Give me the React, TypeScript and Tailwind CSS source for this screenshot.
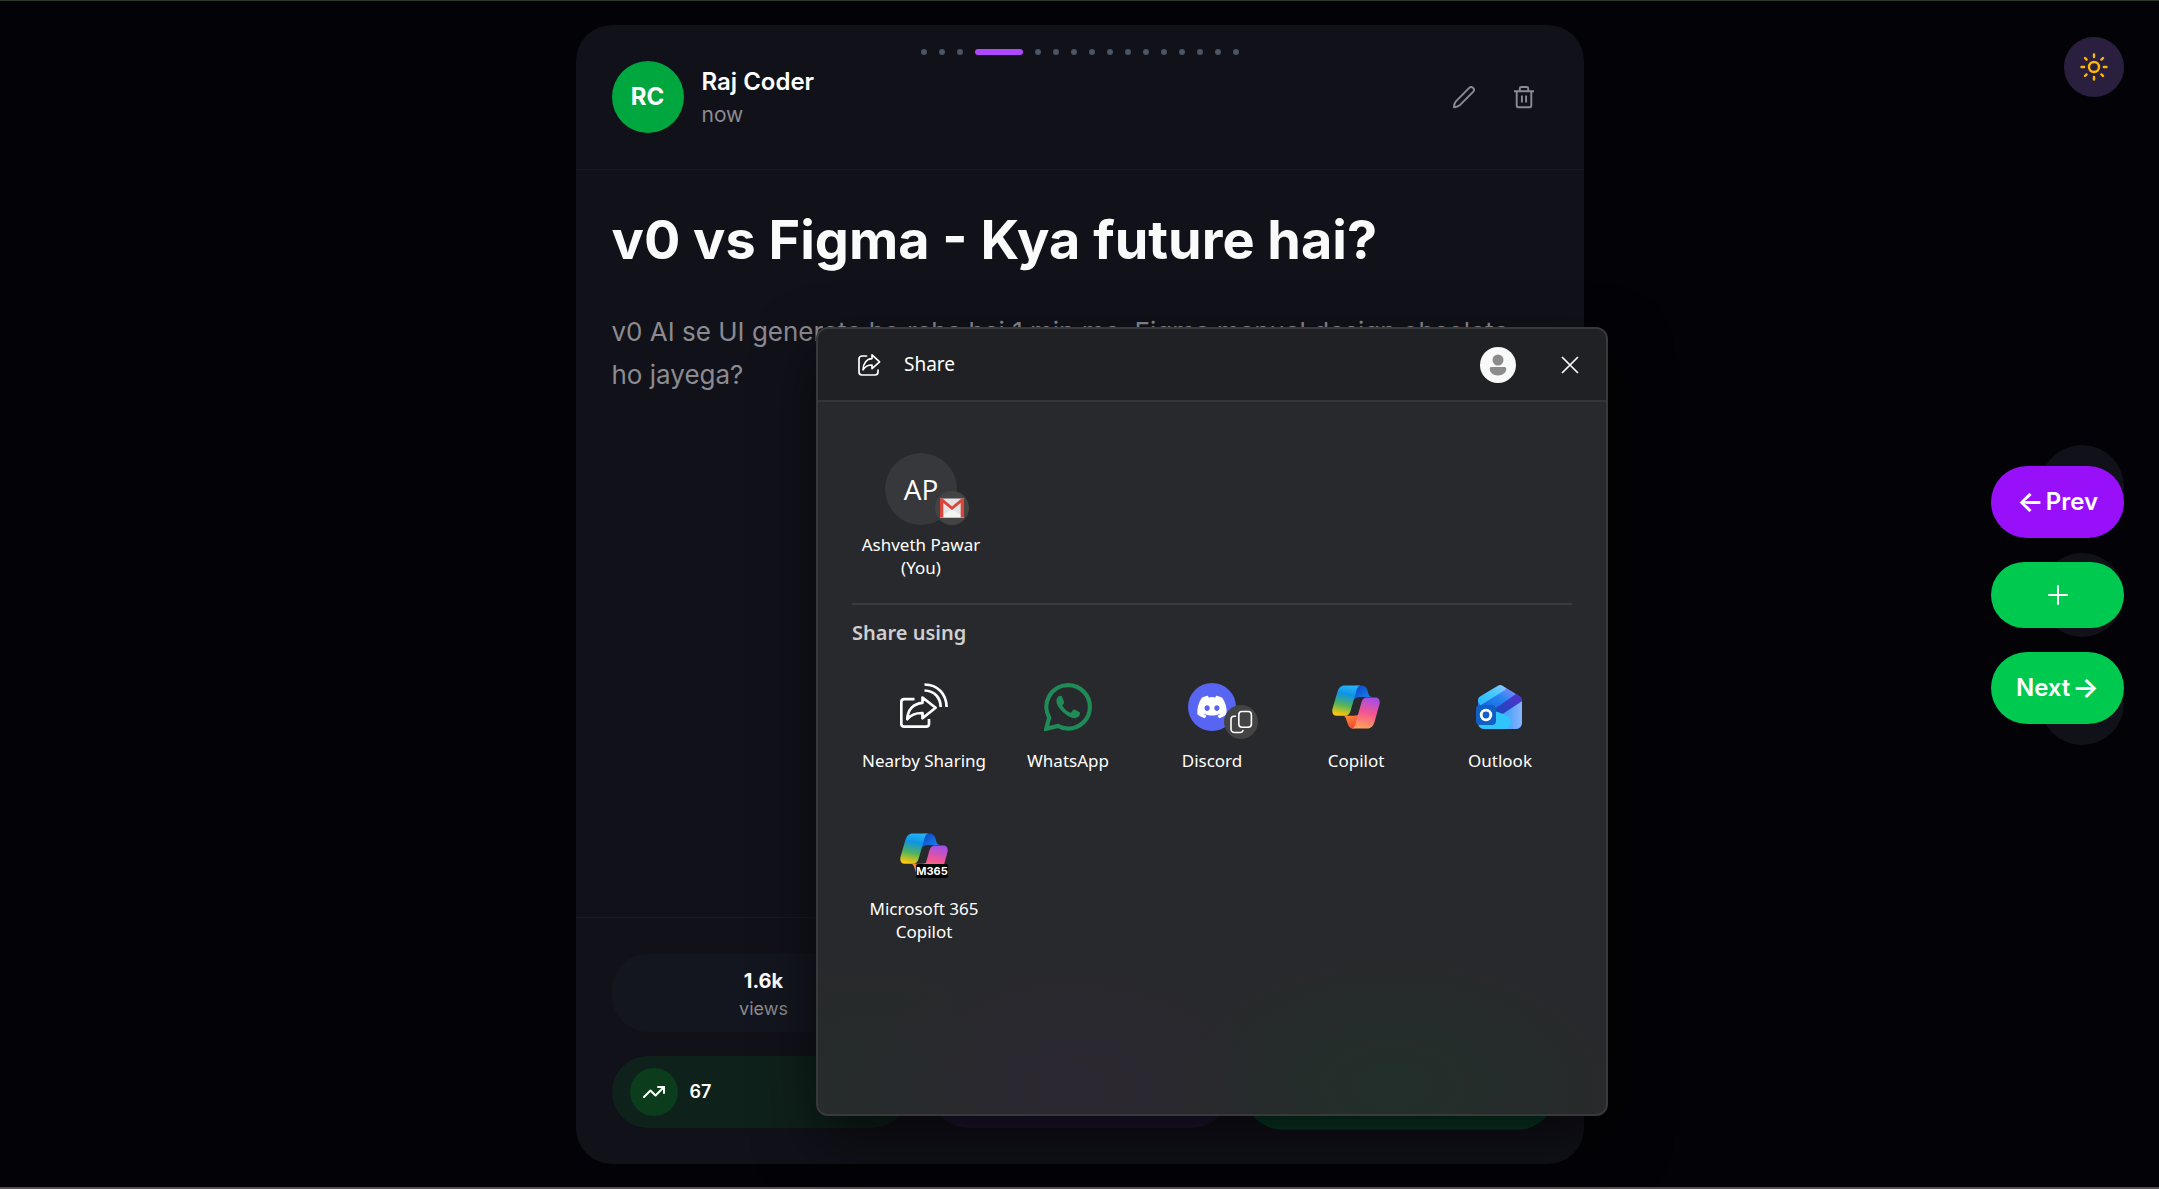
import React from "react";
import clsx from "clsx";
import { FaDiscord } from "react-icons/fa";

const dots = Array.from({ length: 16 }, (_, i) => i);

const PencilIcon = () => (
  <svg viewBox="0 0 24 24" className="size-6" fill="none" stroke="currentColor" strokeWidth="1.9" strokeLinejoin="round" aria-hidden="true">
    <path d="M17.200 2.900a2.750 2.750 0 0 1 3.900 3.900L7.600 20.300c-1.500 1.300-3.500 2-5.600 1.900c0-2.200.500-4.300 1.900-5.900z" />
  </svg>
);

const TrashIcon = () => (
  <svg viewBox="0 0 24 24" className="size-6" fill="none" stroke="currentColor" strokeWidth="1.9" aria-hidden="true">
    <path d="M2 6.200h20M7.800 6.200V3.500A1.500 1.500 0 0 1 9.300 2h5.400a1.500 1.500 0 0 1 1.500 1.500v2.700M4.700 6.200v14.300A1.700 1.700 0 0 0 6.400 22.200h11.200a1.700 1.700 0 0 0 1.700-1.700V6.200M9.900 10.500v7M14.100 10.500v7" />
  </svg>
);

const SunIcon = () => (
  <svg viewBox="0 0 28 28" className="size-7" fill="none" stroke="currentColor" strokeWidth="2.400" strokeLinecap="round" aria-hidden="true">
    <circle cx="14" cy="14" r="5" />
    <path d="M14 1.500v2.600M14 23.900v2.600M1.500 14h2.600M23.900 14h2.600M5 5l1.600 1.600M21.400 21.400l1.600 1.600M5 23l1.600-1.600M21.400 6.600l1.600-1.600" />
  </svg>
);

const ShareIcon = () => (
  <svg viewBox="0 0 24 24" className="size-6" fill="none" stroke="currentColor" strokeWidth="1.700" strokeLinejoin="round" strokeLinecap="round" aria-hidden="true">
    <path d="M9.500 3H5a3 3 0 0 0-3 3v13a3 3 0 0 0 3 3h13a3 3 0 0 0 3-3v-2" />
    <path d="M15 1.800L22.600 8.800L15 15.600V12C10.500 12 8 13.500 6 16.800C6.200 10.500 9.500 6 15 5.600z" />
  </svg>
);

const NearbyIcon = () => (
  <svg viewBox="0 0 48 48" className="size-12" fill="none" stroke="#fff" strokeWidth="2.700" strokeLinejoin="round" aria-hidden="true">
    <path d="M14.500 16.200H4a2.900 2.900 0 0 0-2.700 2.900V41A2.900 2.900 0 0 0 4 43.700h22.200A2.900 2.900 0 0 0 29 41v-5" />
    <path d="M22.500 14.500L35.600 24.800L22.500 35.200V30C15 29.800 11 31.500 7.300 36.200C7.500 27 13 20.500 22.500 19.800z" />
    <path d="M24.500 1.500C38 1.800 46.300 11 46.600 24M24.500 7.500C34.500 7.800 40.400 14.500 40.700 24" />
  </svg>
);

const WhatsAppIcon = () => (
  <svg viewBox="0 0 48 48" className="size-12" aria-hidden="true">
    <path d="M24.200 2.200a21.600 21.600 0 0 1 0 43.400c-3.800 0-7.300-1-10.400-2.700L2.200 45.800l3-11.200A21.700 21.700 0 0 1 24.200 2.200z" fill="none" stroke="#1f8b56" strokeWidth="4.200" />
    <path d="M16.400 12.800c-2.400.3-4 2.600-4 5.200c0 3.400 2.600 7.600 6.400 11c4 3.800 8.600 6.200 11.800 6.200c3 0 5.400-2.200 5.400-5.200c0-.6-.2-.9-.7-1.100l-4.800-2.300c-.6-.3-1-.2-1.400.3l-1.800 2.300c-.4.5-.9.6-1.500.3c-3.200-1.400-5.600-3.700-7.200-6.500c-.3-.5-.2-.9.100-1.300l1.200-1.500c.3-.4.4-.8.2-1.300l-2-5c-.3-.8-.8-1.200-1.700-1.100z" fill="#1f8b56" />
  </svg>
);

const DiscordIcon = () => (
  <span className="flex size-12 items-center justify-center rounded-full bg-[#5865f2] text-white">
    <FaDiscord className="size-8" aria-hidden="true" />
  </span>
);

const CopilotIcon = ({ id, m365 }: { id: string; m365?: boolean }) => (
  <svg viewBox="0 0 48 48" className="size-12" aria-hidden="true">
    <defs>
      <linearGradient id={`${id}-left`} x1=".6" y1="0" x2=".4" y2="1">
        <stop offset="0" stopColor="#23b4f5" />
        <stop offset=".3" stopColor="#0f93e4" />
        <stop offset=".65" stopColor="#4fb35d" />
        <stop offset="1" stopColor="#fdc70c" />
      </linearGradient>
      <linearGradient id={`${id}-right`} x1=".6" y1="0" x2=".4" y2="1">
        <stop offset="0" stopColor="#a44ee8" />
        <stop offset=".5" stopColor="#f5578f" />
        <stop offset="1" stopColor="#ffa25c" />
      </linearGradient>
      <linearGradient id={`${id}-top`} x1="0" y1="0" x2="1" y2="1">
        <stop offset="0" stopColor="#0b40c4" />
        <stop offset="1" stopColor="#1a8cf0" />
      </linearGradient>
      <linearGradient id={`${id}-bottom`} x1="0" y1="0" x2=".6" y2="1">
        <stop offset="0" stopColor="#ffa03c" />
        <stop offset="1" stopColor="#f2452f" />
      </linearGradient>
    </defs>
    <path d="M22 2.500h7.400c3 0 5 1.600 5.900 4.600l1.200 4c.6 2 1.700 3 3.700 3H28c-3 0-5 1-6.500 3z" fill={`url(#${id}-top)`} />
    <path d="M10 32.700c2.200 0 3.200.9 3.700 2.300l2 5.800c1 3 2.400 4.700 5 4.700c3 0 3.600-1.700 4.500-5l2.600-10c-1.500 1.500-3.500 2.200-6 2.200z" fill={`url(#${id}-bottom)`} />
    <path d="M12.600 2.500H29c-2.700 0-3.800 2.300-4.600 5l-5.500 19.200c-1 3.600-2.400 6.100-6 6.100H4.600C1 32.800-.4 29.600.6 25.600L5.400 9c1.300-4.300 3.500-6.500 7.200-6.500z" fill={`url(#${id}-left)`} />
    <path d="M35.300 45.500H19c2.700 0 3.800-2.300 4.600-5l5.500-20c1-3.600 2.400-6.100 6-6.100h8.300c3.600 0 5 3.200 4 7.200L42.500 39c-1.300 4.300-3.500 6.500-7.200 6.500z" fill={`url(#${id}-right)`} />
    {m365 && (
      <g>
        <rect x="16" y="33" width="32" height="14" rx="2" fill="#000" />
        <text x="32" y="44" textAnchor="middle" fontSize="11" fontWeight="700" fill="#fff" fontFamily="Inter, sans-serif">M365</text>
      </g>
    )}
  </svg>
);

const OutlookIcon = () => (
  <svg viewBox="0 0 48 48" className="size-12" aria-hidden="true">
    <defs>
      <linearGradient id="ol-a" x1="0" y1="1" x2="1" y2="0">
        <stop offset="0" stopColor="#22b5fb" />
        <stop offset=".6" stopColor="#4cc9ff" />
        <stop offset="1" stopColor="#9fc4ff" />
      </linearGradient>
      <linearGradient id="ol-b" x1="0" y1="1" x2="1" y2="0">
        <stop offset="0" stopColor="#0f5fd8" />
        <stop offset=".6" stopColor="#2a86f2" />
        <stop offset="1" stopColor="#9a8cff" />
      </linearGradient>
      <linearGradient id="ol-c" x1="0" y1="1" x2="1" y2="0">
        <stop offset="0" stopColor="#0c4fb8" />
        <stop offset="1" stopColor="#5b2fd0" />
      </linearGradient>
      <linearGradient id="ol-d" x1="0" y1="0" x2="1" y2="0">
        <stop offset="0" stopColor="#1c8cf5" />
        <stop offset="1" stopColor="#8fb8ff" />
      </linearGradient>
      <clipPath id="ol-clip">
        <path d="M22 2.700a4 4 0 0 1 4.300 0L44 13.500a4 4 0 0 1 2 3.400V40a6 6 0 0 1-6 6H8a6 6 0 0 1-6-6V16.900a4 4 0 0 1 2-3.400z" />
      </clipPath>
    </defs>
    <g clipPath="url(#ol-clip)">
      <path d="M0 0h48v48H0z" fill="#1d6fe8" />
      <path d="M0 16L24 0c5 1 8 4 6 7L5 23z" fill="url(#ol-a)" />
      <path d="M5 22L29 7l2-3l9 7L20 28l-8 1z" fill="url(#ol-b)" />
      <path d="M14 29L40 11l8 6L24 33z" fill="url(#ol-c)" />
      <path d="M22 34L48 17v31H18z" fill="url(#ol-d)" />
      <path d="M2 22l28 10c7 3 6 12 0 14H2z" fill="#2fc4fb" />
    </g>
    <rect x="0" y="22" width="20" height="20" rx="4" fill="#1060c4" />
    <circle cx="10" cy="32" r="4.800" fill="none" stroke="#fff" strokeWidth="2.800" />
  </svg>
);

const CopyBadge = () => (
  <span className="absolute top-[22px] left-9 flex size-[34px] items-center justify-center rounded-full bg-[#444]">
    <svg viewBox="0 0 24 24" className="size-6" fill="none" stroke="#fff" strokeWidth="1.600" strokeLinecap="round" aria-hidden="true">
      <rect x="9.800" y="1.500" width="12.600" height="15.800" rx="3.200" />
      <path d="M6.500 6.200H5a3 3 0 0 0-3 3V19a3.500 3.500 0 0 0 3.500 3.500H11a3.200 3.200 0 0 0 3-2" />
    </svg>
  </span>
);

const apps = [
  { name: "Nearby Sharing", icon: <NearbyIcon /> },
  { name: "WhatsApp", icon: <WhatsAppIcon /> },
  { name: "Discord", icon: <DiscordIcon />, badge: true },
  { name: "Copilot", icon: <CopilotIcon id="cp" /> },
  { name: "Outlook", icon: <OutlookIcon /> },
  { name: "Microsoft 365 Copilot", icon: <CopilotIcon id="m365" m365 /> },
];

const Post = () => (
  <article className="relative flex w-full max-w-[1008px] flex-col rounded-[36px] bg-[#11111a]">
    <div className="absolute inset-x-0 top-6 flex justify-center gap-3">
      {dots.map((i) => (
        <span key={i} className={clsx("h-[6px] rounded-full", i === 3 ? "w-12 bg-[#ad46ff]" : "w-[6px] bg-[#4a5565]")} />
      ))}
    </div>

    <header className="flex items-center gap-[18px] border-b border-[#191922] p-9">
      <div className="flex size-[72px] items-center justify-center rounded-full bg-[#00a63e] text-2xl font-bold">RC</div>
      <div className="flex-1">
        <p className="text-2xl leading-9 font-semibold">Raj Coder</p>
        <p className="text-[21px] leading-[30px] text-[#8b8b90]">now</p>
      </div>
      <div className="flex gap-3 text-[#8b8b90]">
        <button type="button" aria-label="Edit" className="flex size-12 items-center justify-center">
          <PencilIcon />
        </button>
        <button type="button" aria-label="Delete" className="flex size-12 items-center justify-center">
          <TrashIcon />
        </button>
      </div>
    </header>

    <div className="flex-1 p-9">
      <h1 className="text-[54px] leading-[68px] font-bold text-[#fafafa]">v0 vs Figma - Kya future hai?</h1>
      <p className="mt-9 text-[26px] leading-[43px] text-[#8b8b90]">
        v0 AI se UI generate ho raha hai 1 min me. Figma manual design obsolete
        <br />
        ho jayega?
      </p>
    </div>

    <footer className="border-t border-[#191922] p-9">
      <div className="grid grid-cols-3 gap-3 pb-6">
        <div className="flex h-[78px] flex-col items-center justify-center rounded-[36px] bg-[#14161f] pt-[3px]">
          <p className="text-xl leading-[27px] font-bold">1.6k</p>
          <p className="text-lg leading-[27px] text-[#8b8b90]">views</p>
        </div>
      </div>
      <div className="grid grid-cols-3 gap-6">
        <button type="button" className="flex h-[72px] items-center gap-3 rounded-[36px] bg-[#0f211b] px-[18px] text-lg font-semibold">
          <span className="flex size-12 items-center justify-center rounded-full bg-[#0b3c1c]">
            <svg viewBox="0 0 24 24" className="size-6" fill="none" stroke="currentColor" strokeWidth="2" strokeLinecap="round" strokeLinejoin="round" aria-hidden="true">
              <path d="M16 7h6v6" />
              <path d="m22 7-8.500 8.500-5-5L2 17" />
            </svg>
          </span>
          67
        </button>
        <div className="h-[72px] rounded-[36px] bg-[#1f1530]" />
        <div className="h-[72px] scale-105 rounded-[36px] bg-[#0a3a25]" />
      </div>
    </footer>
  </article>
);

const ShareDialog = () => (
  <div
    role="dialog"
    aria-label="Share"
    className="absolute top-[326px] left-[816px] flex h-[789px] w-[792px] flex-col overflow-hidden rounded-xl border-2 border-[#38393b] bg-[#28292c] font-['Noto_Sans',sans-serif] shadow-[0_24px_60px_rgba(0,0,0,0.6)]"
  >
    <div className="flex h-[73px] items-center border-b-2 border-[#343538] bg-[#202124] pr-[6px] pl-[39px]">
      <ShareIcon />
      <h2 className="flex-1 pl-[23px] text-[19px]">Share</h2>
      <svg viewBox="0 0 36 36" className="size-9" aria-hidden="true">
        <circle cx="18" cy="18" r="18" fill="#f9f9f9" />
        <circle cx="18" cy="13" r="5.500" fill="#8b8b8b" />
        <path d="M11.500 20h13a1.800 1.800 0 0 1 1.800 1.800c0 4-3.800 6.700-8.300 6.700s-8.300-2.700-8.300-6.700a1.800 1.800 0 0 1 1.800-1.800z" fill="#8b8b8b" />
      </svg>
      <button type="button" aria-label="Close" className="ml-6 flex size-[60px] items-center justify-center">
        <svg viewBox="0 0 18 18" className="size-[18px]" stroke="#fff" strokeWidth="1.700" aria-hidden="true">
          <path d="M1 1l16 16M17 1L1 17" />
        </svg>
      </button>
    </div>

    <div className="flex-1 bg-[radial-gradient(ellipse_220px_130px_at_73%_96%,#22302a,transparent),radial-gradient(ellipse_220px_130px_at_32%_96%,#2c2832,transparent),radial-gradient(ellipse_200px_130px_at_6%_96%,#262c2b,transparent)] px-[34px] pt-[51px]">
      <div className="flex w-[138px] flex-col items-center">
        <div className="relative flex size-[72px] items-center justify-center rounded-full bg-[#37383b] font-['Open_Sans',sans-serif] text-[28px]">
          AP
          <span className="absolute top-[38px] left-[50px] flex size-[34px] items-center justify-center rounded-full bg-[#444]">
            <svg viewBox="0 0 24 20" className="h-5 w-6" aria-hidden="true">
              <path d="M0 .5h24v19H0z" fill="#e3e3e3" />
              <path d="M12 11L0 19.500h24z" fill="#f3f3f3" />
              <path d="M0 .5h2.500L12 8.500L21.500 .5H24v19h-3.300V5L12 12L3.300 5v14.500H0z" fill="#d8453a" />
            </svg>
          </span>
        </div>
        <p className="mt-2 text-center text-[17px] leading-[23px]">
          Ashveth Pawar
          <br />
          (You)
        </p>
      </div>

      <hr className="mt-6 border-t-2 border-[#3b3c3f]" />
      <h3 className="mt-[14px] text-xl leading-[28px] font-semibold text-[#cfcfd0]">Share using</h3>

      <ul className="mt-9 grid grid-cols-5 gap-y-[59px]">
        {apps.map((app) => (
          <li key={app.name}>
            <button type="button" className="flex w-full flex-col items-center">
              <span className="relative">
                {app.icon}
                {app.badge && <CopyBadge />}
              </span>
              <span className="mt-[18px] max-w-[132px] text-[17px] leading-[23px]">{app.name}</span>
            </button>
          </li>
        ))}
      </ul>
    </div>
  </div>
);

const App = () => {
  return (
    <main className="relative flex min-h-screen justify-center border-t border-b-2 border-t-[#2c3a2c] border-b-[#59504c] bg-[#030307] pt-6 pb-[23px] font-['Inter',sans-serif] text-white">
      <Post />

      <button type="button" aria-label="Toggle theme" className="absolute top-9 right-[35px] flex size-[60px] items-center justify-center rounded-full bg-[#2b1f40] text-[#fdb800]">
        <SunIcon />
      </button>

      <div className="absolute top-[444px] right-[35px] flex flex-col gap-6">
        <span className="size-[84px] rounded-full bg-[#11111a]" />
        <span className="size-[84px] rounded-full bg-[#11111a]" />
        <span className="size-[84px] rounded-full bg-[#11111a]" />
      </div>
      <nav className="absolute top-[465px] right-[35px] flex w-[133px] flex-col gap-6 text-2xl font-semibold">
        <button type="button" className="flex h-[72px] items-center justify-center gap-[2px] rounded-[36px] bg-[#9810fa]">
          <span className="text-[28px]">←</span> Prev
        </button>
        <button type="button" aria-label="Add" className="flex h-[66px] items-center justify-center rounded-[36px] bg-[#00c950]">
          <svg viewBox="0 0 20 20" className="size-5" stroke="currentColor" strokeWidth="2" strokeLinecap="round" aria-hidden="true">
            <path d="M10 1v18M1 10h18" />
          </svg>
        </button>
        <button type="button" className="flex h-[72px] items-center justify-center gap-[2px] rounded-[36px] bg-[#00c950]">
          Next <span className="text-[28px]">→</span>
        </button>
      </nav>

      <ShareDialog />
    </main>
  );
};

export default App;
